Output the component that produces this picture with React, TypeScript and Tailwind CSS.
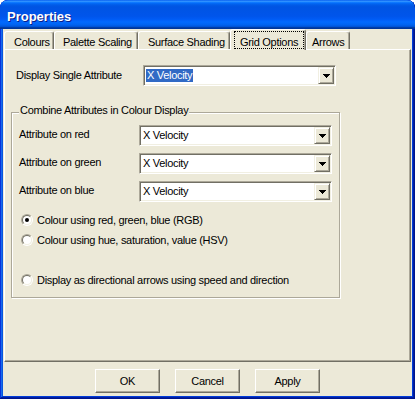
const tabs = [
  { label: 'Colours', className: 'w-[50px] pl-[9px]' },
  { label: 'Palette Scaling', className: 'w-[84px] pl-[8px]' },
  { label: 'Surface Shading', className: 'w-[92px] pl-[9px]' },
  { label: 'Grid Options', className: 'w-[76px]', active: true },
  { label: 'Arrows', className: 'w-[44px] pl-[5px]' },
];

const channels = ['red', 'green', 'blue'];

function Combo({ value, selected = false }: { value: string; selected?: boolean }) {
  return (
    <div className="flex w-[193px] h-[21px] shrink-0 bg-white p-[1px] border border-t-[#ACA899] border-l-[#ACA899] border-r-white border-b-white shadow-[inset_1px_1px_#716F64,inset_-1px_-1px_#F1EFE2]">
      <div className="flex-1 flex items-center pl-[1px]">
        <span className={selected ? 'bg-[#316AC5] text-white px-[1px] leading-[13px]' : 'px-[1px] leading-[13px]'}>{value}</span>
      </div>
      {/* dropdown button */}
      <div className="w-[16px] h-[17px] flex items-center justify-center pt-[1px] bg-[#ECE9D8] border border-t-[#F1EFE2] border-l-[#F1EFE2] border-r-[#716F64] border-b-[#716F64] shadow-[inset_1px_1px_white,inset_-1px_-1px_#ACA899]">
        <svg width="7" height="4" viewBox="0 0 7 4" shapeRendering="crispEdges">
          <polygon points="0,0 7,0 3.5,4" fill="#000" />
        </svg>
      </div>
    </div>
  );
}

function Radio({ label, checked = false, className = '' }: { label: string; checked?: boolean; className?: string }) {
  return (
    <div className={`flex items-center h-[16px] pl-[9px] gap-[4px] ${className}`}>
      <span className="w-[12px] h-[12px] shrink-0 rounded-full flex items-center justify-center border border-t-[#ACA899] border-l-[#ACA899] border-r-white border-b-white">
        <span className="w-[10px] h-[10px] rounded-full flex items-center justify-center bg-white border border-t-[#716F64] border-l-[#716F64] border-r-[#F1EFE2] border-b-[#F1EFE2]">
          {checked && <span className="w-[4px] h-[4px] rounded-full bg-black" />}
        </span>
      </span>
      <span className="leading-[13px]">{label}</span>
    </div>
  );
}

function Button({ children }: { children: string }) {
  return (
    <button className="w-[65px] h-[24px] flex items-center justify-center bg-[#ECE9D8] border border-t-white border-l-white border-r-[#716F64] border-b-[#716F64] shadow-[inset_-1px_-1px_#ACA899]">
      {children}
    </button>
  );
}

export default function App() {
  return (
    <div className="w-[415px] h-[399px] flex flex-col rounded-t-[8px] overflow-hidden bg-[#0855dd] shadow-[inset_-1px_-1px_#00138c,inset_1px_1px_#0831d9,inset_-2px_-2px_#001ea0,inset_2px_2px_#166aee,inset_-3px_-3px_#003bda,inset_3px_3px_#0855dd] font-['Liberation_Sans',Arial,sans-serif] text-[11px] tracking-[-0.3px] text-black select-none">
      {/* Title bar */}
      <div className="h-[29px] shrink-0 flex items-start pt-[9px] pl-[7px] rounded-t-[8px] bg-[linear-gradient(to_bottom,#0058ee_0%,#3593ff_4%,#288eff_6%,#127dff_8%,#036ffc_10%,#0262ee_14%,#0057e5_20%,#0054e3_24%,#0055eb_56%,#005bf5_66%,#026afe_76%,#0062ef_86%,#0052d6_92%,#0040ab_94%,#003092_100%)]">
        <span className="text-white font-bold text-[13px] tracking-normal leading-[15px] [text-shadow:1px_1px_#0a1e8a]">Properties</span>
      </div>

      {/* Body */}
      <div className="flex-1 mx-[3px] mb-[3px] bg-[#ECE9D8] flex flex-col">
        {/* Tabs */}
        <div className="h-[20px] shrink-0 flex items-end pl-[1px]">
          {tabs.map((t) =>
            t.active ? (
              <div key={t.label} className={`relative z-10 h-[21px] -mb-[1px] pt-[1px] pl-[3px] bg-[#ECE9D8] rounded-t-[3px] border-t border-l border-r border-t-white border-l-white border-r-[#716F64] shadow-[inset_-1px_0_#ACA899] ${t.className}`}>
                <span className="inline-block h-[18px] px-[5px] pt-[4px] leading-[13px] border border-dotted border-black">{t.label}</span>
              </div>
            ) : (
              <div key={t.label} className={`h-[18px] pt-[4px] leading-[13px] whitespace-nowrap rounded-t-[3px] border-t border-l border-r border-t-white border-l-white border-r-[#716F64] shadow-[inset_-1px_0_#ACA899] ${t.className}`}>
                {t.label}
              </div>
            )
          )}
        </div>

        {/* Panel */}
        <div className="h-[313px] shrink-0 mx-[1px] flex flex-col pt-[15px] border border-t-white border-l-white border-r-[#716F64] border-b-[#716F64] shadow-[inset_-1px_-1px_#ACA899]">
          <div className="flex items-center pl-[11px]">
            <span className="w-[127px] leading-[13px]">Display Single Attribute</span>
            <Combo value="X Velocity" selected />
          </div>

          <fieldset className="ml-[6px] mt-[18px] w-[329px] pt-[4px] pb-[9px] border border-[#ACA899] shadow-[inset_1px_1px_white,1px_1px_white]">
            <legend className="ml-[7px] px-[1px] pb-[4px] leading-[13px] bg-[#ECE9D8]">Combine Attributes in Colour Display</legend>

            <div className="flex flex-col gap-[7px]">
              {channels.map((c) => (
                <div key={c} className="flex items-start pl-[7px]">
                  <span className="w-[120px] mt-[3px] leading-[13px]">Attribute on {c}</span>
                  <Combo value="X Velocity" />
                </div>
              ))}
            </div>

            <Radio className="mt-[10px]" label="Colour using red, green, blue (RGB)" checked />
            <Radio className="mt-[4px]" label="Colour using hue, saturation, value (HSV)" />
            <Radio className="mt-[24px]" label="Display as directional arrows using speed and direction" />
          </fieldset>
        </div>

        {/* Buttons */}
        <div className="flex justify-center gap-[15px] pt-[7px]">
          <Button>OK</Button>
          <Button>Cancel</Button>
          <Button>Apply</Button>
        </div>
      </div>
    </div>
  );
}
